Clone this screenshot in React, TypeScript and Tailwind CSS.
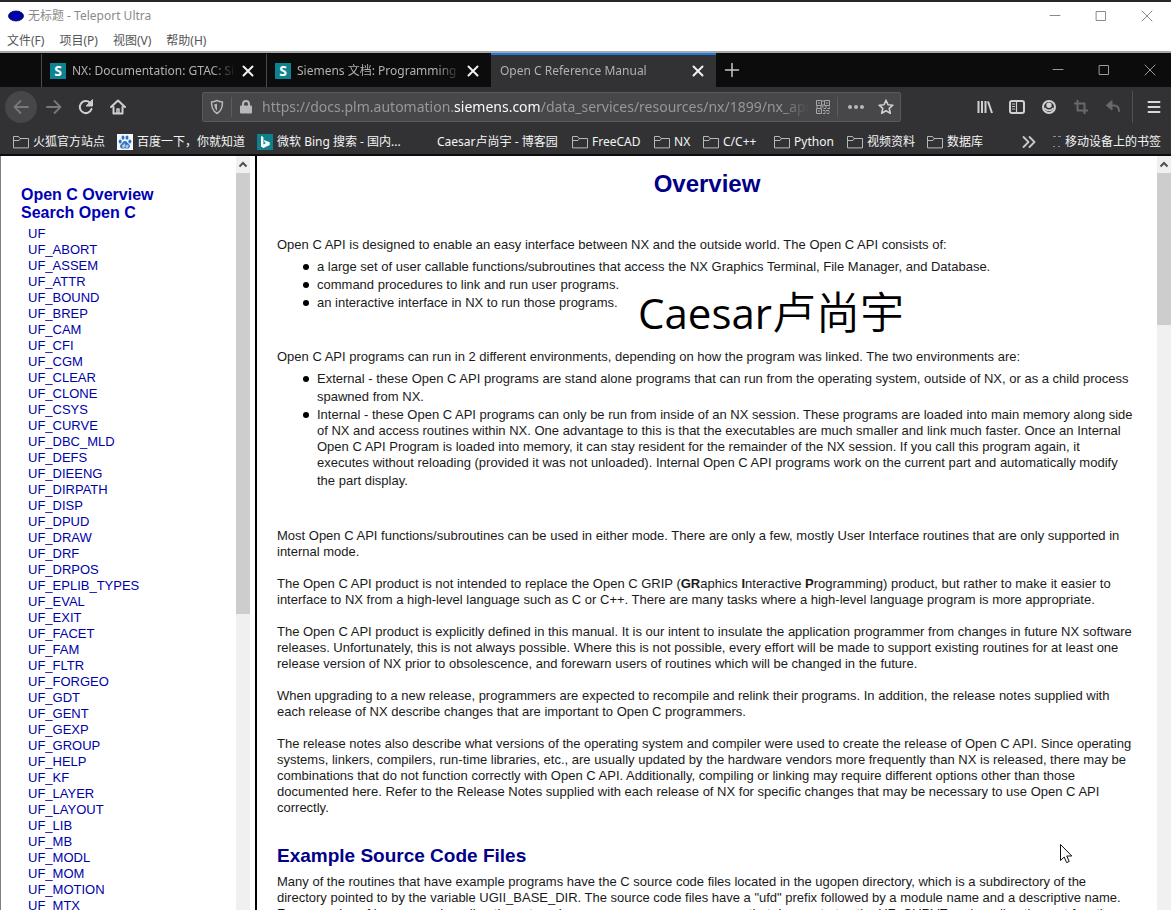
import type { ReactNode } from 'react';

const sidebarLinks = [
  'UF',
  'UF_ABORT',
  'UF_ASSEM',
  'UF_ATTR',
  'UF_BOUND',
  'UF_BREP',
  'UF_CAM',
  'UF_CFI',
  'UF_CGM',
  'UF_CLEAR',
  'UF_CLONE',
  'UF_CSYS',
  'UF_CURVE',
  'UF_DBC_MLD',
  'UF_DEFS',
  'UF_DIEENG',
  'UF_DIRPATH',
  'UF_DISP',
  'UF_DPUD',
  'UF_DRAW',
  'UF_DRF',
  'UF_DRPOS',
  'UF_EPLIB_TYPES',
  'UF_EVAL',
  'UF_EXIT',
  'UF_FACET',
  'UF_FAM',
  'UF_FLTR',
  'UF_FORGEO',
  'UF_GDT',
  'UF_GENT',
  'UF_GEXP',
  'UF_GROUP',
  'UF_HELP',
  'UF_KF',
  'UF_LAYER',
  'UF_LAYOUT',
  'UF_LIB',
  'UF_MB',
  'UF_MODL',
  'UF_MOM',
  'UF_MOTION',
  'UF_MTX',
];

const menus = ['文件(F)', '项目(P)', '视图(V)', '帮助(H)'];

interface IconProps {
  children: ReactNode;
  className?: string;
}

const Icon = ({ children, className = '' }: IconProps) => (
  <svg
    viewBox="0 0 16 16"
    fill="none"
    stroke="currentColor"
    strokeWidth="2"
    strokeLinecap="round"
    strokeLinejoin="round"
    className={`size-4 shrink-0 ${className}`}
    aria-hidden="true"
  >
    {children}
  </svg>
);

const CloseIcon = () => (
  <Icon>
    <path d="M3.5 3.5l9 9M12.5 3.5l-9 9" />
  </Icon>
);

const FolderIcon = () => (
  <Icon className="text-[#b8b8ba]">
    <path d="M.5 13.5v-11h5l1.5 2h8.500v9zM.5 6.500h5.500l1.500-2" strokeWidth="1" />
  </Icon>
);

const SiemensIcon = () => (
  <span className="flex size-4 shrink-0 items-center justify-center bg-[#0f8292] text-sm font-bold text-white" aria-hidden="true">
    S
  </span>
);

const BaiduIcon = () => (
  <svg viewBox="0 0 16 16" className="size-4 shrink-0" aria-hidden="true">
    <rect width="16" height="16" fill="#f4f8fc" />
    <g fill="#2f74c0">
      <ellipse cx="3.200" cy="7.500" rx="1.500" ry="2" />
      <ellipse cx="6" cy="3.700" rx="1.500" ry="2.100" />
      <ellipse cx="10" cy="3.700" rx="1.500" ry="2.100" />
      <ellipse cx="12.900" cy="7.500" rx="1.500" ry="2" />
      <path d="M8 7c-2 0-2.500 2-4 3.200-1.600 1.400-1 4.300 1.500 4.300 1 0 1.500-.3 2.500-.3s1.500.3 2.500.3c2.500 0 3.100-2.900 1.500-4.300C10.500 9 10 7 8 7z" />
    </g>
    <path d="M7.200 9.500v3.700H5.800v-2h1.400M9 10.700v2.500h1.800v-2.500" fill="none" stroke="#fff" strokeWidth=".8" />
  </svg>
);

const BingIcon = () => (
  <svg viewBox="0 0 16 16" className="size-4 shrink-0" aria-hidden="true">
    <rect width="16" height="16" fill="#10808c" />
    <path d="M4 2l2.400.9v7.600l2.600-1.600-1.400-.7-.9-2.200 6 2.200v2.700L6.400 14 4 12.600z" fill="#fff" />
  </svg>
);

interface WindowButtonsProps {
  className: string;
}

const WindowButtons = ({ className }: WindowButtonsProps) => (
  <div className={`ml-auto flex ${className}`}>
    <button type="button" aria-label="Minimize" className="flex w-[46px] items-center justify-center">
      <Icon>
        <path d="M3 7.500h10" strokeWidth="1" />
      </Icon>
    </button>
    <button type="button" aria-label="Maximize" className="flex w-[46px] items-center justify-center">
      <Icon>
        <path d="M3.500 3.500h9v9h-9z" strokeWidth="1" />
      </Icon>
    </button>
    <button type="button" aria-label="Close" className="flex w-[46px] items-center justify-center">
      <Icon>
        <path d="M3 3l10 10M13 3L3 13" strokeWidth="1" />
      </Icon>
    </button>
  </div>
);

const TitleBar = () => (
  <header className="shrink-0 border-t-2 border-[#2a262b] bg-white text-xs">
    <div className="flex h-7 items-stretch">
      <div className="flex items-center gap-1 pl-2 text-[#8a8a8a]">
        <svg viewBox="0 0 16 12" className="h-3 w-4" aria-hidden="true">
          <ellipse cx="8" cy="6" rx="7.500" ry="5" fill="#0000a8" stroke="#000060" strokeWidth=".8" />
        </svg>
        <span>无标题 - Teleport Ultra</span>
      </div>
      <WindowButtons className="pr-px text-[#8a8a8a]" />
    </div>
    <nav className="flex h-[21px] items-center gap-[15px] pl-[7px] text-[#555]">
      {menus.map((menu) => (
        <button key={menu} type="button">
          {menu}
        </button>
      ))}
    </nav>
    <div className="h-0.5 bg-[#a8a8a8]" />
  </header>
);

interface TabProps {
  title: string;
  active?: boolean;
}

const Tab = ({ title, active = false }: TabProps) => (
  <div
    className={`flex w-[225px] items-center border-t-2 pr-2.5 ${
      active ? 'border-t-[#1a7ae0] bg-[#323234] pl-[9px]' : 'border-l border-t-transparent border-l-[#4a4a4c] pl-2'
    }`}
  >
    <button type="button" className="flex min-w-0 flex-1 items-center gap-1.5 text-left text-[#b1b1b3]">
      {!active && <SiemensIcon />}
      <span className="flex-1 overflow-hidden mask-r-from-85% whitespace-nowrap">{title}</span>
    </button>
    <button type="button" aria-label={`Close ${title}`} className="ml-1 text-[#f0f0f0]">
      <CloseIcon />
    </button>
  </div>
);

const TabStrip = () => (
  <div className="flex h-[34px] shrink-0 bg-[#0c0c0d] pl-[41px] text-xs">
    <Tab title="NX: Documentation: GTAC: Siemens PLM" />
    <Tab title="Siemens 文档: Programming Tools" />
    <Tab title="Open C Reference Manual" active />
    <button type="button" aria-label="New tab" className="px-2 text-[#c8c8ca]">
      <Icon>
        <path d="M8 1.500v13M1.500 8h13" strokeWidth="1.500" />
      </Icon>
    </button>
    <WindowButtons className="-mr-0.5 text-[#9a9a9c]" />
  </div>
);

interface ToolButtonProps {
  label: string;
  children: ReactNode;
  className?: string;
}

const ToolButton = ({ label, children, className = 'w-8 text-[#d0d0d2]' }: ToolButtonProps) => (
  <button type="button" aria-label={label} className={`flex h-8 shrink-0 items-center justify-center ${className}`}>
    <Icon>{children}</Icon>
  </button>
);

const UrlBar = () => (
  <div className="flex h-[30px] min-w-0 flex-1 items-center rounded-xs border border-[#5a5a5c] bg-[#474749] text-[#b8b8ba]">
    <ToolButton label="Tracking protection" className="w-7">
      <path d="M8 1.500c2 1 3.500 1.300 5.500 1.500 0 5-1 9-5.500 11.500C3.500 12 2.500 8 2.500 3 4.500 2.800 6 2.500 8 1.500z" strokeWidth="1.500" />
      <path d="M8 4.500c-1 .5-1.700.7-2.700.8.200 3 .9 5 2.700 6.500z" fill="currentColor" stroke="none" />
    </ToolButton>
    <span className="h-5 w-px bg-[#5c5c5e]" />
    <ToolButton label="Site information" className="w-7">
      <path d="M5 7V5a3 3 0 0 1 6 0v2" />
      <rect x="3" y="7.500" width="10" height="6" fill="currentColor" />
    </ToolButton>
    <div className="relative min-w-0 flex-1 pl-0.5">
      <label htmlFor="url" className="block overflow-hidden mask-r-from-95% text-sm whitespace-nowrap text-[#97979a]">
        https://docs.plm.automation.<span className="text-[#f9f9fa]">siemens.com</span>
        /data_services/resources/nx/1899/nx_api
      </label>
      <input id="url" type="text" className="absolute inset-0 w-full bg-transparent outline-none" />
    </div>
    <ToolButton label="QR code" className="w-7 text-[#a8a8aa]">
      <path
        d="M1.500 1.500h5v5h-5zM9.500 1.500h5v5h-5zM1.500 9.500h5v5h-5zM3 4h2M11 4h2M3 12h2M8 1v2M8 5v3M1 8h2M5 8h3M10 8h2M14 8h1M8.500 9.500h2.500M12.500 9.500h2.500M8 11.500h2M11 11.500h3M9.500 13h2M13.500 13h1.500M8 14.500h2.500M12 14.500h2"
        strokeWidth="1"
        strokeLinecap="butt"
      />
    </ToolButton>
    <span className="h-5 w-px bg-[#5c5c5e]" />
    <ToolButton label="Page actions" className="w-9">
      <path d="M2 8h.01M8 8h.01M14 8h.01" strokeWidth="4" />
    </ToolButton>
    <ToolButton label="Bookmark this page" className="mr-0.5 w-6 text-[#d0d0d2]">
      <path d="M8 1.200l2 4.500 4.900.5-3.700 3.200 1.100 4.900L8 11.800l-4.300 2.500 1.100-4.900L1.100 6.200 6 5.700z" strokeWidth="1.600" />
    </ToolButton>
  </div>
);

const NavBar = () => (
  <div className="flex h-10 shrink-0 items-center bg-[#323234] pl-[5px]">
    <ToolButton label="Back" className="w-8 rounded-full bg-[#474749] text-[#79797b]">
      <path d="M15 8H1.500M7.500 2l-6 6 6 6" strokeWidth="1.800" />
    </ToolButton>
    <ToolButton label="Forward" className="ml-px w-8 text-[#79797b]">
      <path d="M1 8h13.500M8.500 2l6 6-6 6" strokeWidth="1.800" />
    </ToolButton>
    <ToolButton label="Reload">
      <path d="M13.500 10A6 6 0 1 1 12 3.800" />
      <path d="M14.500 1v6h-6z" fill="currentColor" strokeWidth="1" />
    </ToolButton>
    <ToolButton label="Home">
      <path d="M1 8l7-6.500L15 8M3.500 8v6.500h9V8" />
      <path d="M7 14v-4h2v4" strokeWidth="1.500" />
    </ToolButton>
    <div className="flex min-w-0 flex-1 px-[68px]">
      <UrlBar />
    </div>
    <ToolButton label="Library">
      <path d="M1.500 2v12M5 2v12M8.500 2v12M11 2.500L15 14" strokeLinecap="butt" />
    </ToolButton>
    <ToolButton label="Sidebars">
      <rect x="1" y="2" width="14" height="12" rx="2" />
      <path d="M7.500 2v12M3.500 5h2M3.500 7.500h2M3.500 10h2" strokeWidth="1.200" />
    </ToolButton>
    <ToolButton label="Account">
      <circle cx="8" cy="8" r="6" />
      <path d="M8 3.500a2.700 2.700 0 1 1 0 5.400 2.700 2.700 0 0 1 0-5.400z" fill="currentColor" stroke="none" />
      <path d="M4 9.500c1.800 2.600 6.200 2.600 8 0" strokeWidth="1.800" />
    </ToolButton>
    <ToolButton label="Screenshot" className="w-8 text-[#69696c]">
      <path d="M4.500 1v10.500H15M1 4.500h10.500V15" strokeLinecap="butt" />
    </ToolButton>
    <ToolButton label="Undo" className="w-8 text-[#69696c]">
      <path d="M7 2v9L1.500 6.500z" fill="currentColor" strokeWidth="1" />
      <path d="M6 6.500h3c3 0 5 2 5 5.500" />
    </ToolButton>
    <span className="ml-[3px] h-8 w-px bg-[#505052]" />
    <ToolButton label="Menu" className="ml-1 w-[34px] text-[#d8d8da]">
      <path d="M2.500 3h11M2.500 8h11M2.500 13h11" />
    </ToolButton>
  </div>
);

interface BookmarkProps {
  icon?: ReactNode;
  className?: string;
  children: ReactNode;
}

const Bookmark = ({ icon = <FolderIcon />, className = '', children }: BookmarkProps) => (
  <a href="#" className={`flex shrink-0 items-center gap-1 whitespace-nowrap ${className}`}>
    {icon}
    {children}
  </a>
);

const BookmarkBar = () => (
  <nav className="flex h-[29px] shrink-0 items-center gap-3 border-b-2 border-[#0c0c0d] bg-[#323234] pt-0.5 pr-2.5 pl-[13px] text-xs text-[#f4f4f5]">
    <Bookmark>火狐官方站点</Bookmark>
    <Bookmark icon={<BaiduIcon />}>百度一下，你就知道</Bookmark>
    <Bookmark icon={<BingIcon />} className="min-w-[148px]">
      微软 Bing 搜索 - 国内...
    </Bookmark>
    <Bookmark icon={<span className="size-4" />} className="min-w-[143px]">
      Caesar卢尚宇 - 博客园
    </Bookmark>
    <Bookmark className="min-w-[70px]">FreeCAD</Bookmark>
    <Bookmark className="min-w-[37px]">NX</Bookmark>
    <Bookmark className="min-w-[59px]">C/C++</Bookmark>
    <Bookmark className="min-w-[61px]">Python</Bookmark>
    <Bookmark>视频资料</Bookmark>
    <Bookmark>数据库</Bookmark>
    <button type="button" aria-label="More bookmarks" className="mr-1 ml-auto text-[#c8c8ca]">
      <Icon>
        <path d="M2.500 3l5 5-5 5M8.500 3l5 5-5 5" strokeWidth="1.800" />
      </Icon>
    </button>
    <a href="#" className="flex shrink-0 items-center gap-1">
      <svg viewBox="0 0 8 16" className="h-4 w-2 text-[#8a8a8c]" stroke="currentColor" aria-hidden="true">
        <path d="M0 2.500h3M5 2.500h3M0 12.500h2M5 12.500h2" />
      </svg>
      移动设备上的书签
    </a>
  </nav>
);

interface ScrollbarProps {
  thumb: string;
}

const Scrollbar = ({ thumb }: ScrollbarProps) => (
  <div className="w-3.5 shrink-0 bg-[#f0f0f0]" aria-hidden="true">
    <div className="flex h-[17px] items-center justify-center text-[#505050]">
      <Icon>
        <path d="M4.500 9.500L8 6l3.500 3.500" strokeLinecap="butt" strokeLinejoin="miter" />
      </Icon>
    </div>
    <div className={`bg-[#cdcdcd] ${thumb}`} />
  </div>
);

const Sidebar = () => (
  <aside className="flex w-64 shrink-0 border-r-2 border-black bg-white pr-[5px]">
    <div className="min-w-0 flex-1 overflow-hidden pt-[30px] pl-5 text-[#0000a8]">
      <div className="flex flex-col text-base leading-[18px] font-bold text-[#0000b4]">
        <a href="#">Open C Overview</a>
        <a href="#">Search Open C</a>
      </div>
      <ul className="pt-1 pl-[7px] text-[13px] leading-4">
        {sidebarLinks.map((link) => (
          <li key={link}>
            <a href="#">{link}</a>
          </li>
        ))}
      </ul>
    </div>
    <Scrollbar thumb="h-[441px]" />
  </aside>
);

interface BulletProps {
  children: ReactNode;
  className?: string;
}

const Bullet = ({ children, className = 'leading-[18px]' }: BulletProps) => (
  <li
    className={`relative before:absolute before:top-1.5 before:-left-3.5 before:size-1.5 before:rounded-full before:bg-black ${className}`}
  >
    {children}
  </li>
);

const Manual = () => (
  <main className="min-w-0 flex-1 overflow-hidden px-5 pt-3.5 text-[13px] leading-4 text-[#1a1a1a]">
    <h1 className="text-center text-2xl leading-7 font-bold text-[#000088]">Overview</h1>
    <p className="pt-[39px]">
      Open C API is designed to enable an easy interface between NX and the outside world. The Open C API consists of:
    </p>
    <ul className="pt-[5px] pl-10">
      <Bullet>
        a large set of user callable functions/subroutines that access the NX Graphics Terminal, File Manager, and Database.
      </Bullet>
      <Bullet>command procedures to link and run user programs.</Bullet>
      <Bullet>an interactive interface in NX to run those programs.</Bullet>
    </ul>
    <p className="pt-[37px]">
      Open C API programs can run in 2 different environments, depending on how the program was linked. The two environments are:
    </p>
    <ul className="pt-[5px] pl-10">
      <Bullet>
        External - these Open C API programs are stand alone programs that can run from the operating system, outside of NX, or as a
        child process spawned from NX.
      </Bullet>
      <Bullet className="pt-px pr-1">
        Internal - these Open C API programs can only be run from inside of an NX session. These programs are loaded into main memory
        along side of NX and access routines within NX. One advantage to this is that the executables are much smaller and link much
        faster. Once an Internal Open C API Program is loaded into memory, it can stay resident for the remainder of the NX session.
        If you call this program again, it executes without reloading (provided it was not unloaded). Internal Open C API programs
        work on the current part and automatically modify
        <span className="block pt-0.5">the part display.</span>
      </Bullet>
    </ul>
    <div className="flex flex-col gap-4 pt-[39px]">
      <p>
        Most Open C API functions/subroutines can be used in either mode. There are only a few, mostly User Interface routines that
        are only supported in internal mode.
      </p>
      <p>
        The Open C API product is not intended to replace the Open C GRIP (<b>GR</b>aphics <b>I</b>nteractive <b>P</b>rogramming)
        product, but rather to make it easier to interface to NX from a high-level language such as C or C++. There are many tasks
        where a high-level language program is more appropriate.
      </p>
      <p>
        The Open C API product is explicitly defined in this manual. It is our intent to insulate the application programmer from
        changes in future NX software releases. Unfortunately, this is not always possible. Where this is not possible, every effort
        will be made to support existing routines for at least one release version of NX prior to obsolescence, and forewarn users of
        routines which will be changed in the future.
      </p>
      <p>
        When upgrading to a new release, programmers are expected to recompile and relink their programs. In addition, the release
        notes supplied with each release of NX describe changes that are important to Open C programmers.
      </p>
      <p>
        The release notes also describe what versions of the operating system and compiler were used to create the release of Open C
        API. Since operating systems, linkers, compilers, run-time libraries, etc., are usually updated by the hardware vendors more
        frequently than NX is released, there may be combinations that do not function correctly with Open C API. Additionally,
        compiling or linking may require different options other than those documented here. Refer to the Release Notes supplied with
        each release of NX for specific changes that may be necessary to use Open C API correctly.
      </p>
    </div>
    <h2 className="pt-[29px] text-[19px] leading-[22px] font-bold text-[#000088]">Example Source Code Files</h2>
    <p className="pt-[7px]">
      Many of the routines that have example programs have the C source code files located in the ugopen directory, which is a
      subdirectory of the directory pointed to by the variable UGII_BASE_DIR. The source code files have a "ufd" prefix followed by a
      module name and a descriptive name. For examples of how several reading the external names are seen, see programs that
      demonstrates the UF_CURVE and reading the part functions.
    </p>
  </main>
);

const Cursor = () => (
  <svg viewBox="0 0 12 20" className="absolute top-[844px] left-[1060px] h-5 w-3" aria-hidden="true">
    <path
      d="M.5.500v16l3.700-3.500 2.400 5.600 2.600-1.100L6.800 12h5z"
      fill="#fff"
      stroke="#111"
    />
  </svg>
);

export default function App() {
  return (
    <div className="relative flex h-screen flex-col overflow-hidden bg-white font-['Noto_Sans','Noto_Sans_CJK_SC',sans-serif]">
      <TitleBar />
      <TabStrip />
      <NavBar />
      <BookmarkBar />
      <div className="flex min-h-0 flex-1 border-l border-[#808080] font-['Liberation_Sans',sans-serif]">
        <Sidebar />
        <Manual />
        <Scrollbar thumb="h-[152px]" />
      </div>
      <div className="pointer-events-none absolute top-[282px] left-[638px] font-['Open_Sans','Noto_Sans_CJK_SC',sans-serif] text-[42px] leading-[60px] text-black">
        Caesar<span className="text-[44px] font-[350]">卢尚宇</span>
      </div>
      <Cursor />
    </div>
  );
}
